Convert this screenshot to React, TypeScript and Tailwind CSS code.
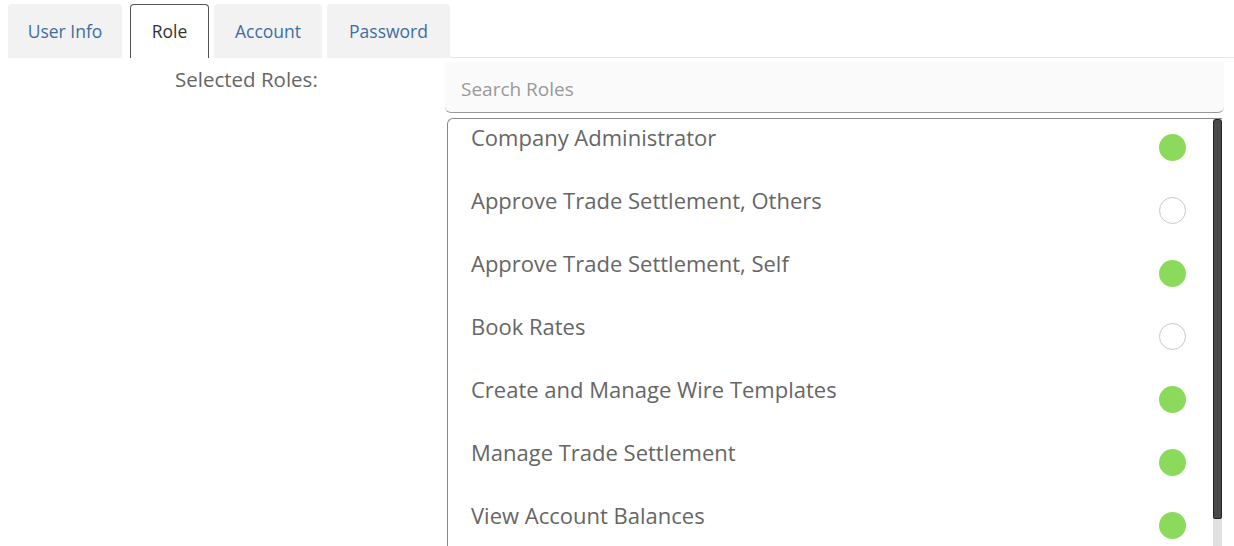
import { useState } from "react";

type Role = { name: string; selected: boolean };

const roles: Role[] = [
    { name: "Company Administrator", selected: true },
    { name: "Approve Trade Settlement, Others", selected: false },
    { name: "Approve Trade Settlement, Self", selected: true },
    { name: "Book Rates", selected: false },
    { name: "Create and Manage Wire Templates", selected: true },
    { name: "Manage Trade Settlement", selected: true },
    { name: "View Account Balances", selected: true },
];

const tabs = [
    { label: "User Info", cls: "w-[114px]" },
    { label: "Role", cls: "w-[79px] ml-[8px]" },
    { label: "Account", cls: "w-[108px] ml-[5px]" },
    { label: "Password", cls: "w-[123px] ml-[5px]" },
];

export default function App() {
    const [activeTab, setActiveTab] = useState<string>("Role");
    const [items, setItems] = useState<Role[]>(roles);

    const toggle = (name: string) =>
        setItems((prev) => prev.map((r) => (r.name === name ? { ...r, selected: !r.selected } : r)));

    return (
        <main className="w-[1234px] h-[546px] overflow-hidden bg-white font-['Open_Sans',sans-serif]">
            {/* tab strip */}
            <div className="flex items-end pl-[8px] pt-[4px]">
                <div className="flex">
                    {tabs.map((t) => {
                        const active = t.label === activeTab;
                        return (
                            <button
                                key={t.label}
                                type="button"
                                onClick={() => setActiveTab(t.label)}
                                className={`${t.cls} h-[54px] text-[17.5px] rounded-t-[4px] ${
                                    active
                                        ? "bg-white border border-b-0 border-[#555] text-[#333]"
                                        : "bg-[#f2f2f2] text-[#3d6ea3]"
                                }`}
                            >
                                {t.label}
                            </button>
                        );
                    })}
                </div>
                <div className="flex-1 h-px bg-[#e6e6e6]"></div>
            </div>

            <div className="flex">
                <div className="w-[445px] pl-[175px] pt-[7px]">
                    <span className="text-[20.5px] leading-[28px] text-[#666]">Selected Roles:</span>
                </div>

                <div className="w-[779px] pt-[4px]">
                    <div className="h-[51px] bg-[#fafafa] border-b border-[#999] rounded-b-[6px] flex items-center pl-[16px] pt-[4px]">
                        <input
                            placeholder="Search Roles"
                            className="w-full bg-transparent outline-none text-[19px] text-[#555] placeholder:text-[#999]"
                        />
                    </div>

                    <div className="mt-[5px] mx-[2px] h-[440px] flex border border-[#888] border-r-0 rounded-tl-[6px]">
                        <ul className="flex-1">
                            {items.map((r) => (
                                <li
                                    key={r.name}
                                    onClick={() => toggle(r.name)}
                                    className="h-[63px] flex justify-between pl-[23px] pr-[27px] pt-[3px] cursor-pointer"
                                >
                                    <span className="text-[22px] leading-[30px] text-[#666]">{r.name}</span>
                                    <span
                                        className={`mt-[12px] w-[27px] h-[27px] rounded-full ${
                                            r.selected ? "bg-[#8cda5b]" : "border-[1.5px] border-[#c8c8c8]"
                                        }`}
                                    ></span>
                                </li>
                            ))}
                        </ul>
                        {/* scrollbar */}
                        <div className="w-[9px] flex flex-col bg-[#e0e0e0]">
                            <div className="h-[400px] bg-[#4a4a4a] border border-[#222] rounded-t-[3px] rounded-b-[2px]"></div>
                        </div>
                    </div>
                </div>
            </div>
        </main>
    );
}
